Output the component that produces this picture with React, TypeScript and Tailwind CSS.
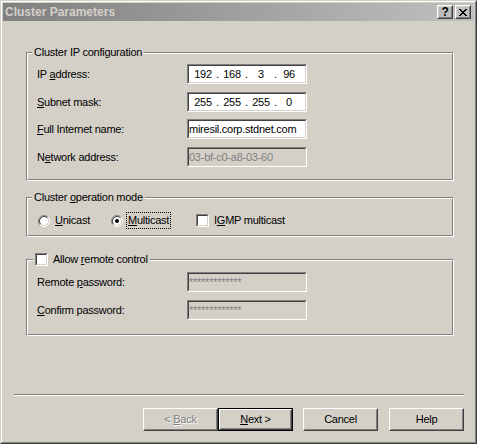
import React from 'react';

type Kids = { children?: React.ReactNode };

const U = ({ children }: Kids) => <span className="underline underline-offset-[1px]">{children}</span>;

// classic 3D edges
const Sunken = ({ className = '', innerClass = '', children }: Kids & { className?: string; innerClass?: string }) => (
  <div className={`border border-t-[#808080] border-l-[#808080] border-r-white border-b-white ${className}`}>
    <div className={`h-full border border-t-[#404040] border-l-[#404040] border-r-[#d4d0c8] border-b-[#d4d0c8] ${innerClass}`}>
      {children}
    </div>
  </div>
);

const Raised = ({ className = '', innerClass = '', children }: Kids & { className?: string; innerClass?: string }) => (
  <div className={`border border-t-white border-l-white border-r-[#404040] border-b-[#404040] ${className}`}>
    <div className={`h-full border border-t-[#d4d0c8] border-l-[#d4d0c8] border-r-[#808080] border-b-[#808080] ${innerClass}`}>
      {children}
    </div>
  </div>
);

const GroupBox = ({ caption, className = '', captionClass = '', children }: Kids & { caption: React.ReactNode; className?: string; captionClass?: string }) => (
  <div className={`relative border border-t-[#808080] border-l-[#808080] border-r-white border-b-white ${className}`}>
    <div className="border border-t-white border-l-white border-r-[#808080] border-b-[#808080]">{children}</div>
    <div className={`absolute -top-[8px] h-[14px] flex items-center bg-[#d4d0c8] px-[2px] ${captionClass}`}>{caption}</div>
  </div>
);

const Check = () => <Sunken className="w-[13px] h-[13px] shrink-0" innerClass="bg-white" />;

const Radio = ({ checked }: { checked?: boolean }) => (
  <svg width="12" height="12" viewBox="0 0 12 12" className="shrink-0">
    <circle cx="6" cy="6" r="4.5" fill="#fff" />
    <path d="M2.11 9.89 A5.5 5.5 0 0 1 9.89 2.11" fill="none" stroke="#808080" />
    <path d="M9.89 2.11 A5.5 5.5 0 0 1 2.11 9.89" fill="none" stroke="#fff" />
    <path d="M2.82 9.18 A4.5 4.5 0 0 1 9.18 2.82" fill="none" stroke="#404040" />
    <path d="M9.18 2.82 A4.5 4.5 0 0 1 2.82 9.18" fill="none" stroke="#d4d0c8" />
    {checked && <circle cx="6" cy="6" r="2" fill="#000" />}
  </svg>
);

const IpField = ({ parts }: { parts: string[] }) => (
  <Sunken className="w-[120px] h-[20px]" innerClass="bg-white flex items-center pl-[1px]">
    {parts.map((p, i) => (
      <React.Fragment key={i}>
        <span className={`${i === 3 ? 'w-[24px]' : 'w-[26px]'} text-center`}>{p}</span>
        {i < 3 && <span className="w-[3px] text-center">.</span>}
      </React.Fragment>
    ))}
  </Sunken>
);

const Row = ({ label, className = '', children }: Kids & { label: React.ReactNode; className?: string }) => (
  <div className={`flex items-center h-[20px] ${className}`}>
    <div className="w-[150px]">{label}</div>
    {children}
  </div>
);

const Button = ({ children, isDefault, className = '' }: Kids & { isDefault?: boolean; className?: string }) =>
  isDefault ? (
    <div className={`w-[75px] h-[23px] border border-black ${className}`}>
      <Raised className="h-full" innerClass="flex items-center justify-center">{children}</Raised>
    </div>
  ) : (
    <Raised className={`w-[75px] h-[23px] ${className}`} innerClass="flex items-center justify-center">
      {children}
    </Raised>
  );

export default function App() {
  return (
    <div className="w-[477px] h-[444px] bg-[#d4d0c8] border border-t-[#d4d0c8] border-l-[#d4d0c8] border-r-[#404040] border-b-[#404040] font-['Liberation_Sans',Arial,sans-serif] text-[11px] leading-[13px] tracking-[-0.25px] text-black select-none">
      <div className="h-full border border-t-white border-l-white border-r-[#808080] border-b-[#808080] p-[1px] flex flex-col">
        {/* title bar */}
        <div className="h-[18px] flex items-center bg-linear-to-r from-[#808080] to-[#c0c0c0] pl-[2px] pr-[3px]">
          <span className="flex-1 font-bold text-[12px] tracking-normal text-[#d4d0c8]">Cluster Parameters</span>
          <Raised className="w-[16px] h-[14px]" innerClass="flex items-center justify-center">
            <span className="font-bold text-[12px] leading-[10px]">?</span>
          </Raised>
          <Raised className="w-[16px] h-[14px] ml-[2px]" innerClass="flex items-center justify-center">
            <svg width="8" height="7" viewBox="0 0 8 7" shapeRendering="crispEdges">
              <path d="M0 0h2v1H0zM6 0h2v1H6zM1 1h2v1H1zM5 1h2v1H5zM2 2h4v1H2zM3 3h2v1H3zM2 4h4v1H2zM1 5h2v1H1zM5 5h2v1H5zM0 6h2v1H0zM6 6h2v1H6z" fill="#000" />
            </svg>
          </Raised>
        </div>

        {/* body */}
        <div className="flex flex-col flex-1">
          <GroupBox className="ml-[23px] mt-[31px] w-[428px]" captionClass="left-[5px]" caption={<span>Cluster IP configuration</span>}>
            <div className="pl-[9px] pt-[10px] pb-[12px]">
              <Row label={<span>IP <U>a</U>ddress:</span>}>
                <IpField parts={['192', '168', '3', '96']} />
              </Row>
              <Row className="mt-[8px]" label={<span><U>S</U>ubnet mask:</span>}>
                <IpField parts={['255', '255', '255', '0']} />
              </Row>
              <Row className="mt-[7px]" label={<span><U>F</U>ull Internet name:</span>}>
                <Sunken className="w-[120px] h-[20px]" innerClass="bg-white flex items-center">
                  <span>miresil.corp.stdnet.com</span>
                </Sunken>
              </Row>
              <Row className="mt-[8px]" label={<span>N<U>e</U>twork address:</span>}>
                <Sunken className="w-[120px] h-[20px]" innerClass="flex items-center">
                  <span className="text-[#808080]">03-bf-c0-a8-03-60</span>
                </Sunken>
              </Row>
            </div>
          </GroupBox>

          <GroupBox className="ml-[23px] mt-[16px] w-[428px]" captionClass="left-[5px]" caption={<span>Cluster <U>o</U>peration mode</span>}>
            <div className="pl-[10px] pt-[13px] pb-[6px] flex items-center">
              <div className="w-[73px] flex items-center gap-[5px]">
                <Radio />
                <span><U>U</U>nicast</span>
              </div>
              <div className="w-[85px] flex items-center gap-[3px]">
                <Radio checked />
                <span className="border border-dotted border-black px-[1px] h-[17px] flex items-center">
                  <span><U>M</U>ulticast</span>
                </span>
              </div>
              <div className="flex items-center gap-[5px]">
                <Check />
                <span>I<U>G</U>MP multicast</span>
              </div>
            </div>
          </GroupBox>

          <GroupBox
            className="ml-[23px] mt-[22px] w-[428px]"
            captionClass="left-[6px] gap-[5px]"
            caption={
              <>
                <Check />
                <span>Allow <U>r</U>emote control</span>
              </>
            }
          >
            <div className="pl-[9px] pt-[11px] pb-[14px]">
              <Row label={<span>Remote <U>p</U>assword:</span>}>
                <Sunken className="w-[120px] h-[20px]" innerClass="flex items-center">
                  <span className="text-[#808080]">*************</span>
                </Sunken>
              </Row>
              <Row className="mt-[8px]" label={<span><U>C</U>onfirm password:</span>}>
                <Sunken className="w-[120px] h-[20px]" innerClass="flex items-center">
                  <span className="text-[#808080]">*************</span>
                </Sunken>
              </Row>
            </div>
          </GroupBox>

          <div className="ml-[11px] mt-[58px] w-[450px] h-[2px] border-t border-t-[#808080] border-b border-b-white" />

          <div className="mt-[12px] flex justify-end pr-[10px]">
            <Button>
              <span className="text-[#808080] [text-shadow:1px_1px_0_#fff]">&lt; <U>B</U>ack</span>
            </Button>
            <Button isDefault>
              <span><U>N</U>ext &gt;</span>
            </Button>
            <Button className="ml-[10px]">Cancel</Button>
            <Button className="ml-[11px]">Help</Button>
          </div>
        </div>
      </div>
    </div>
  );
}
